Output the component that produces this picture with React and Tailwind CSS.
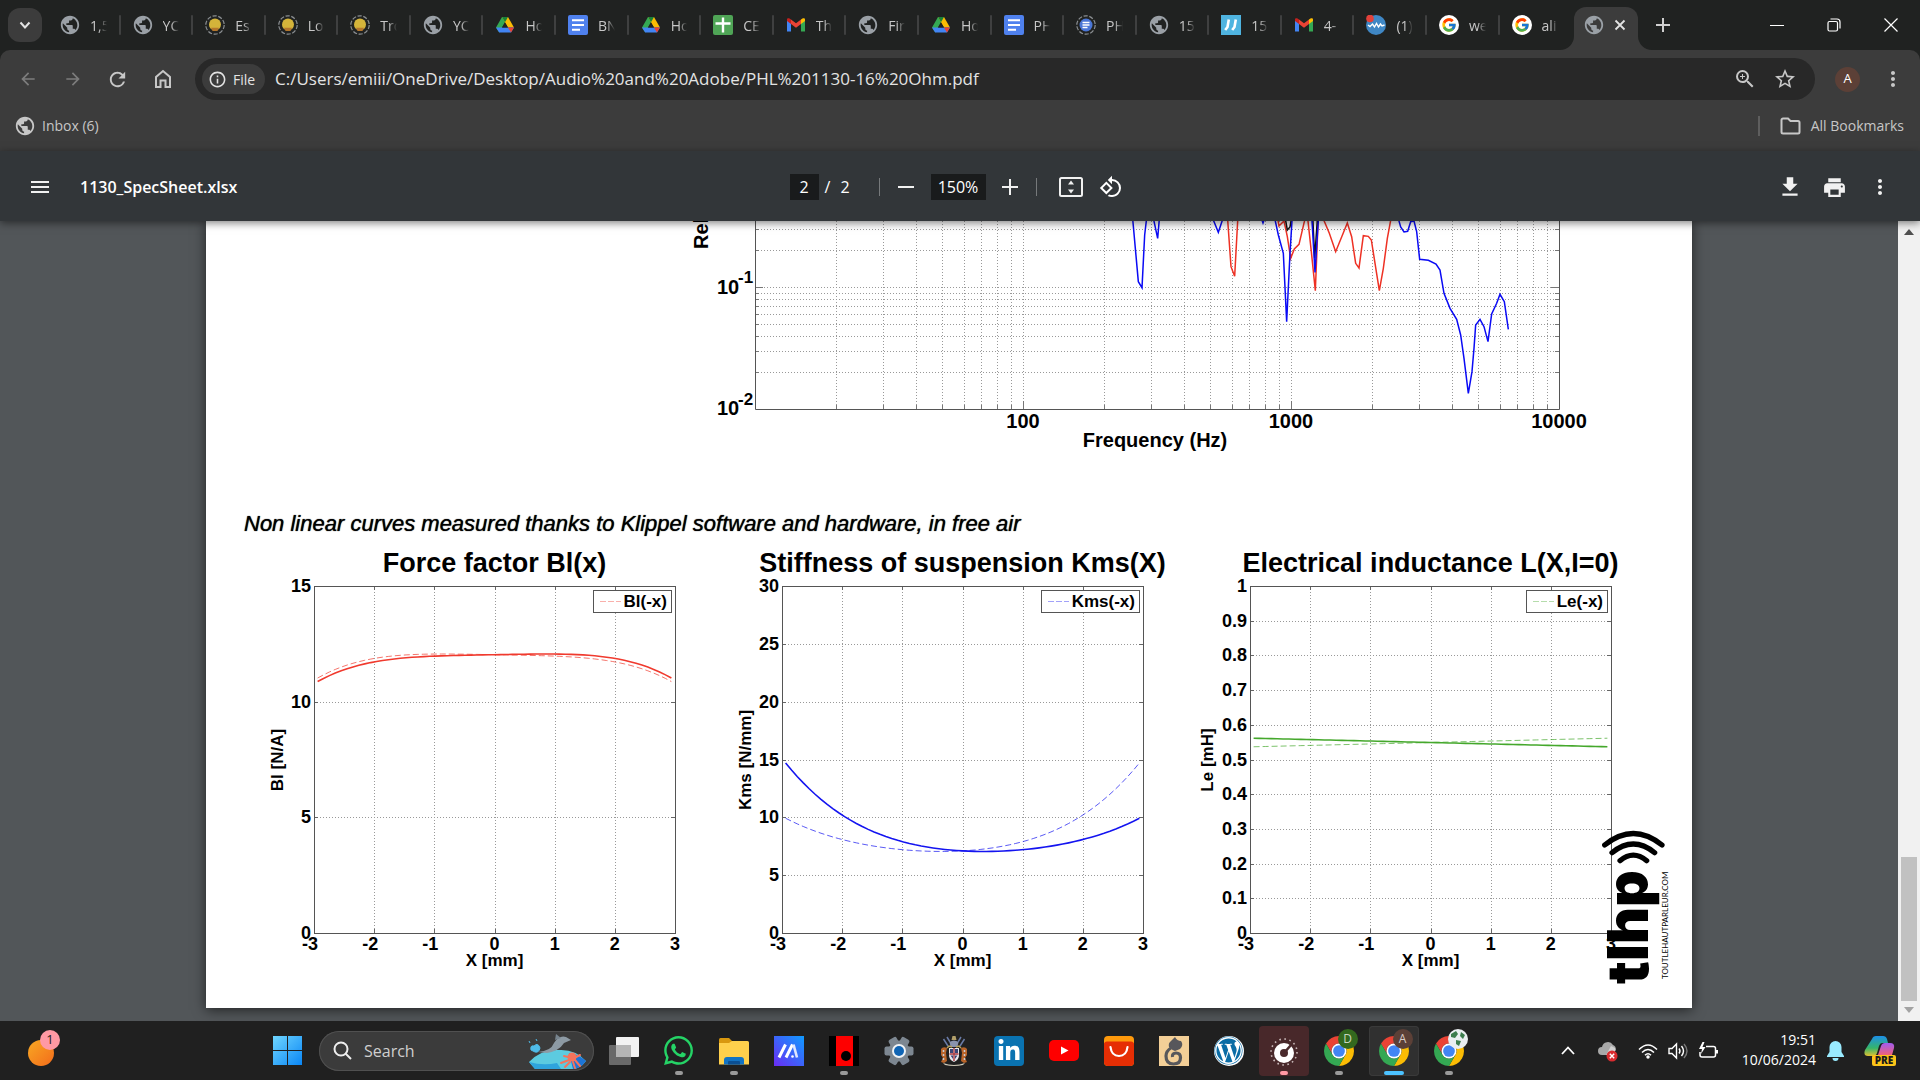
import { FaWhatsapp, FaWordpress, FaLinkedinIn } from 'react-icons/fa';
import { FcGoogle } from 'react-icons/fc';
import {
  MdArrowBack, MdArrowForward, MdFileDownload, MdInfoOutline, MdMenu, MdMoreVert, MdPrint,
  MdPublic, MdRefresh, MdRotate90DegreesCcw, MdStarOutline, MdZoomIn,
} from 'react-icons/md';

const UI_FONT = "font-['Open_Sans','Noto_Sans',sans-serif]";
const DOC_FONT = "font-['Liberation_Sans',Arial,sans-serif]";

/* ---------- favicons ---------- */

const Globe = () => <MdPublic className="h-[22px] w-[22px] -m-px text-[#9aa0a6]" />;

function Drive() {
  return (
    <svg viewBox="0 0 20 20" className="h-5 w-5">
      <path d="M7 2h6l-3.2 5.6L4.2 17.6 1 12.4z" fill="#34a853" />
      <path d="M7 2h6l6 10.4h-6.1z" fill="#fbbc04" />
      <path d="M7 2h6l-3 5.3z" fill="#188038" />
      <path d="M1 12.4h18l-3 5.2H4.2z" fill="#4285f4" />
      <path d="M12.9 12.4H19l-3 5.2z" fill="#ea4335" />
      <path d="M10 7.4l3 5H7z" fill="#202221" />
    </svg>
  );
}

function Docs() {
  return (
    <svg viewBox="0 0 20 20" className="h-5 w-5">
      <rect width="20" height="20" rx="2" fill="#4f81ee" />
      <path d="M4 5.2h12M4 10h12M4 14.8h8" stroke="#fff" strokeWidth="2" />
    </svg>
  );
}

function Sheets() {
  return (
    <svg viewBox="0 0 20 20" className="h-5 w-5">
      <rect width="20" height="20" rx="2" fill="#4fa556" />
      <path d="M10 2.5v15M2.5 8.5h15" stroke="#fff" strokeWidth="2.4" />
    </svg>
  );
}

function Gmail() {
  return (
    <svg viewBox="0 0 20 20" className="h-5 w-5">
      <path d="M1 5v11.5h4V8z" fill="#4285f4" />
      <path d="M15 8v8.500h4V5z" fill="#34a853" />
      <path d="M15 4.500V9l4-3V4.600C19 2.800 17 2.600 15 4.500z" fill="#fbbc04" />
      <path d="M1 4.600C1 2.800 3 2.600 5 4.500V9L1 6z" fill="#c5221f" />
      <path d="M5 4.500l5 3.800 5-3.800V9l-5 3.800L5 9z" fill="#ea4335" />
    </svg>
  );
}

function LoadingRing({ children }) {
  return (
    <svg viewBox="0 0 20 20" className="h-5 w-5">
      <circle cx="10" cy="10" r="9.200" fill="none" stroke="#8b8f92" strokeWidth="1.200" strokeDasharray="4.200 1.600" />
      {children}
    </svg>
  );
}

function Bulb() {
  return (
    <LoadingRing>
      <circle cx="10" cy="9.400" r="6" fill="#d4b43a" />
      <path d="M6 12.800h8l-1.500 3.200H7.500z" fill="#b3762c" />
    </LoadingRing>
  );
}

function DocsLoading() {
  return (
    <LoadingRing>
      <circle cx="10" cy="10" r="6.500" fill="#4a76d6" />
      <path d="M6.500 7.500h7M6.500 10h7M6.500 12.500h5" stroke="#fff" strokeWidth="1.300" />
    </LoadingRing>
  );
}

function Slashes() {
  return (
    <svg viewBox="0 0 20 20" className="h-5 w-5">
      <rect width="20" height="20" fill="#4fb4e0" />
      <path d="M7.800 4.500L6.500 12l-2.300 3M14.800 4.500L13.500 12l-2.300 3" fill="none" stroke="#fff" strokeWidth="2.600" />
    </svg>
  );
}

function Wave() {
  return (
    <svg viewBox="0 0 20 20" className="h-5 w-5">
      <circle cx="10" cy="10" r="10" fill="#3f87c4" />
      <path d="M2 10l2 1.500L6.500 9l2 3 2-3.500 2 3.500 2-3 1.500 2 2.500-1" fill="none" stroke="#fff" strokeWidth="1.400" />
      <circle cx="4" cy="3.500" r="3.800" fill="#e2413a" />
    </svg>
  );
}

function Google() {
  return (
    <span className="flex h-5 w-5 items-center justify-center rounded-full bg-white">
      <FcGoogle className="h-4 w-4" />
    </span>
  );
}

const TABS = [
  { icon: Globe, label: '1,5' },
  { icon: Globe, label: 'YC' },
  { icon: Bulb, label: 'Es' },
  { icon: Bulb, label: 'Lo' },
  { icon: Bulb, label: 'Tro' },
  { icon: Globe, label: 'YC' },
  { icon: Drive, label: 'Ho' },
  { icon: Docs, label: 'BN' },
  { icon: Drive, label: 'Ho' },
  { icon: Sheets, label: 'CE' },
  { icon: Gmail, label: 'Th' },
  { icon: Globe, label: 'Fir' },
  { icon: Drive, label: 'Ho' },
  { icon: Docs, label: 'PH' },
  { icon: DocsLoading, label: 'PH' },
  { icon: Globe, label: '15' },
  { icon: Slashes, label: '15' },
  { icon: Gmail, label: '4-' },
  { icon: Wave, label: '(1)' },
  { icon: Google, label: 'we' },
  { icon: Google, label: 'ali' },
];

/* ---------- browser chrome ---------- */

function TabStrip() {
  return (
    <div className="flex h-[50px] bg-[#202221]">
      <button aria-label="Search tabs" className="my-2 ml-2 mr-1.5 flex w-[34px] items-center justify-center rounded-xl bg-[#3c3c3c]">
        <svg viewBox="0 0 12 12" className="h-3 w-3">
          <path d="M1.500 3.500L6 8.500l4.500-5" fill="none" stroke="#e3e3e3" strokeWidth="2" />
        </svg>
      </button>
      <div className="flex min-w-0 flex-1">
        {TABS.map(({ icon: Icon, label }, i) => (
          <button key={i} className="flex min-w-0 flex-1 items-center pl-3">
            <span className="flex h-5 w-5 shrink-0 items-center justify-center"><Icon /></span>
            <span className="ml-2.5 min-w-0 flex-1 overflow-hidden whitespace-nowrap text-left text-[14px] text-[#c7c7c7] [mask-image:linear-gradient(to_right,#000_50%,transparent)]">
              {label}
            </span>
            <span className={i === TABS.length - 1 ? 'ml-3 w-0.5' : 'ml-3 h-5 w-0.5 rounded bg-[#3f4040]'} />
          </button>
        ))}
      </div>
      <div className="relative ml-0.5 mt-[7px] flex w-16 items-center justify-center gap-2 rounded-t-xl bg-[#3c3c3c]">
        <svg viewBox="0 0 14 14" className="absolute -left-3.5 bottom-0 h-3.5 w-3.5"><path d="M14 0v14H0A14 14 0 0 0 14 0z" fill="#3c3c3c" /></svg>
        <svg viewBox="0 0 14 14" className="absolute -right-3.5 bottom-0 h-3.5 w-3.5"><path d="M0 0v14h14A14 14 0 0 1 0 0z" fill="#3c3c3c" /></svg>
        <span className="mb-2 flex h-5 w-5 items-center justify-center"><Globe /></span>
        <button aria-label="Close tab" className="mb-2 flex h-4 w-4 items-center justify-center">
          <svg viewBox="0 0 12 12" className="h-3 w-3"><path d="M1.500 1.500l9 9M10.500 1.500l-9 9" stroke="#e3e3e3" strokeWidth="1.800" /></svg>
        </button>
      </div>
      <button aria-label="New tab" className="mr-[60px] flex w-[50px] items-center justify-center">
        <svg viewBox="0 0 14 14" className="h-3.5 w-3.5"><path d="M7 0v14M0 7h14" stroke="#d0d0d0" strokeWidth="2" /></svg>
      </button>
      <div className="mr-px flex">
        <button aria-label="Minimize" className="flex w-[57px] items-center justify-center">
          <svg viewBox="0 0 14 14" className="h-3.5 w-3.5"><path d="M0 7.500h14" stroke="#fff" /></svg>
        </button>
        <button aria-label="Restore" className="flex w-[57px] items-center justify-center">
          <svg viewBox="0 0 14 14" className="h-3.5 w-3.5" fill="none" stroke="#fff" strokeWidth="1.200">
            <rect x="1" y="3.500" width="9.500" height="9.500" rx="1.500" />
            <path d="M3.500 1h6.500a3 3 0 0 1 3 3v6.500" />
          </svg>
        </button>
        <button aria-label="Close" className="flex w-[57px] items-center justify-center">
          <svg viewBox="0 0 14 14" className="h-3.5 w-3.5"><path d="M.5.5l13 13M13.500.5l-13 13" stroke="#fff" strokeWidth="1.200" /></svg>
        </button>
      </div>
    </div>
  );
}

function AddressRow() {
  return (
    <div className="flex items-center px-[5px] py-2 text-[#c7c7c7]">
      <button aria-label="Back" className="flex w-[45px] justify-center text-[#7c7c7c]"><MdArrowBack className="h-5 w-5" /></button>
      <button aria-label="Forward" className="flex w-[45px] justify-center text-[#7c7c7c]"><MdArrowForward className="h-5 w-5" /></button>
      <button aria-label="Reload" className="flex w-[45px] justify-center"><MdRefresh className="h-[23px] w-[23px]" /></button>
      <button aria-label="Home" className="flex w-[45px] justify-center">
        <svg viewBox="0 0 20 20" className="h-5 w-5" fill="none" stroke="currentColor" strokeWidth="2">
          <path d="M3 18V8l7-6 7 6v10h-4.500v-6.500h-5V18z" />
        </svg>
      </button>
      <div className="ml-2.5 flex h-[42px] min-w-0 flex-1 items-center rounded-full bg-[#282828] pl-[7px] pr-2.5">
        <button className="flex h-[30px] w-[63px] items-center gap-1.5 rounded-full bg-[#3c3c3c] pl-1.5 text-[14px] font-medium text-[#e3e3e3]">
          <MdInfoOutline className="h-[19px] w-[19px]" />File
        </button>
        <input
          aria-label="Address"
          className="ml-2.5 min-w-0 flex-1 bg-transparent text-[17px] text-[#e3e3e3] outline-none"
          defaultValue="C:/Users/emiii/OneDrive/Desktop/Audio%20and%20Adobe/PHL%201130-16%20Ohm.pdf"
        />
        <button aria-label="Zoom" className="flex w-10 justify-center"><MdZoomIn className="h-6 w-6" /></button>
        <button aria-label="Bookmark this page" className="flex w-10 justify-center"><MdStarOutline className="h-6 w-6" /></button>
      </div>
      <button aria-label="Profile" className="ml-2.5 flex w-[45px] justify-center">
        <span className="flex h-[25px] w-[25px] items-center justify-center rounded-full bg-[#5c4037] text-[13px] text-white">A</span>
      </button>
      <button aria-label="Menu" className="flex w-[45px] justify-center"><MdMoreVert className="h-6 w-6" /></button>
    </div>
  );
}

function BookmarksBar() {
  return (
    <div className="flex h-[35px] items-center px-4 text-[14px] text-[#c7c7c7]">
      <a href="#inbox" className="flex items-center gap-1.5">
        <MdPublic className="h-[22px] w-[22px] -ml-0.5" />Inbox (6)
      </a>
      <span className="ml-auto h-5 w-0.5 bg-[#5e5e5e]" />
      <button className="ml-5 flex items-center gap-2.5">
        <svg viewBox="0 0 21 18" className="h-[18px] w-[21px]" fill="none" stroke="currentColor" strokeWidth="2">
          <path d="M1.500 3a1.500 1.500 0 0 1 1.500-1.500h5L10.500 4H18A1.500 1.500 0 0 1 19.500 5.500V15A1.500 1.500 0 0 1 18 16.500H3A1.500 1.500 0 0 1 1.500 15z" />
        </svg>
        All Bookmarks
      </button>
    </div>
  );
}

function PdfToolbar() {
  return (
    <div className="relative z-10 flex h-[70px] items-center bg-[#323639] pt-0.5 text-[#f1f1f1] shadow-[0_2px_8px_rgba(0,0,0,0.5)]">
      <div className="flex flex-1 items-center pl-7">
        <button aria-label="Menu"><MdMenu className="h-7 w-6" /></button>
        <h1 className="ml-7 text-[16px] font-semibold text-white">1130_SpecSheet.xlsx</h1>
      </div>
      <div className="mr-2.5 flex items-center text-base text-white">
        <input aria-label="Page number" defaultValue="2" className="h-[26px] w-[29px] bg-[#191b1c] text-center outline-none" />
        <span className="flex w-[60px] gap-2.5 pl-1.5"><span>/</span><span>2</span></span>
        <span className="h-[18px] w-px bg-[#76797b]" />
        <button aria-label="Zoom out" className="ml-1.5 flex w-10 justify-center">
          <svg viewBox="0 0 16 16" className="h-4 w-4"><path d="M0 8h16" stroke="#f1f1f1" strokeWidth="2" /></svg>
        </button>
        <input aria-label="Zoom level" defaultValue="150%" className="ml-[5px] h-[26px] w-[55px] bg-[#191b1c] text-center outline-none" />
        <button aria-label="Zoom in" className="ml-1 flex w-10 justify-center">
          <svg viewBox="0 0 16 16" className="h-4 w-4"><path d="M0 8h16M8 0v16" stroke="#f1f1f1" strokeWidth="2" /></svg>
        </button>
        <span className="ml-1.5 h-[18px] w-px bg-[#76797b]" />
        <button aria-label="Fit to page" className="ml-3.5 flex w-10 justify-center">
          <svg viewBox="0 0 24 20" className="h-5 w-6">
            <rect x="1" y="1" width="22" height="18" rx="1.500" fill="none" stroke="#f1f1f1" strokeWidth="2" />
            <path d="M12 3.500l3 4H9zM12 16.500l3-4H9z" fill="#f1f1f1" />
          </svg>
        </button>
        <button aria-label="Rotate counterclockwise" className="flex w-10 justify-center"><MdRotate90DegreesCcw className="h-6 w-6" /></button>
      </div>
      <div className="flex flex-1 items-center justify-end pr-[18px]">
        <button aria-label="Download" className="flex w-[45px] justify-center"><MdFileDownload className="h-[26px] w-[26px]" /></button>
        <button aria-label="Print" className="flex w-[45px] justify-center"><MdPrint className="h-[25px] w-[25px]" /></button>
        <button aria-label="More actions" className="flex w-[45px] justify-center"><MdMoreVert className="h-6 w-6" /></button>
      </div>
    </div>
  );
}

/* ---------- frequency response (log/log) ---------- */

const F_LEFT = 549;
const F_BOTTOM = 188;
const F_DECADE_X = 268;
const F_DECADE_Y = 122;

const fx = hz => F_LEFT + (Math.log10(hz) - 1) * F_DECADE_X;
const fy = v => F_BOTTOM - (Math.log10(v) + 2) * F_DECADE_Y;

const F_RED = [
  '262,0 273,155 284,184 294,0',
  '413,10 417,33 432,18 442,65 452,130 463,102 477,88 493,20 497,0',
  '502,0 514,110 526,227 535,0',
  '545,0 568,55 587,110 622,24 635,65 647,145 657,159 670,62 685,64 694,75 718,227 730,160 742,70 755,0',
];
const F_BLACK = ['434,0 442,45 450,36 456,0', '518,0 524,130 533,0'];
const F_BLUE = [
  '-23,0 -5,200 6,218 14,60 21,0',
  '38,0 53,70 59,0',
  '218,10 235,52 249,10',
  '364,10 369,24 374,10',
  '402,0 415,60 430,115 440,320 450,115 457,0',
  '515,0 525,172 536,0',
  '772,0 782,36 792,51 803,49 812,20 822,18 830,50 839,133 865,136 888,147 900,165 912,235 930,280 950,313 962,360 972,430 985,535 996,470 1002,400 1007,330 1020,313 1032,335 1044,380 1055,297 1070,265 1080,238 1093,260 1105,343',
];

function FrequencyChart() {
  const xs = [1, 2, 3].flatMap(d => [2, 3, 4, 5, 6, 7, 8, 9, 10].map(n => n * 10 ** d)).slice(0, 26);
  const ys = [0.02, 0.03, 0.04, 0.05, 0.06, 0.07, 0.08, 0.09, 0.1, 0.2, 0.3];
  const right = fx(10000);
  return (
    <svg viewBox="0 0 1486 289" className="block w-full text-[20px] font-bold">
      {xs.map(x => (
        <g key={x} stroke="#777">
          <path d={`M${Math.round(fx(x)) + 0.5} 0V${F_BOTTOM}`} strokeDasharray="1 2" stroke="#999" />
          <path d={`M${Math.round(fx(x)) + 0.5} ${F_BOTTOM}v-${x === 100 || x === 1000 ? 8 : 4}`} />
        </g>
      ))}
      {ys.map(y => (
        <g key={y} stroke="#777">
          <path d={`M${F_LEFT} ${Math.round(fy(y)) + 0.5}H${right}`} strokeDasharray="1 2" stroke="#999" />
          <path d={`M${F_LEFT} ${Math.round(fy(y)) + 0.5}h${y === 0.1 ? 8 : 4}M${right} ${Math.round(fy(y)) + 0.5}h-${y === 0.1 ? 8 : 4}`} />
        </g>
      ))}
      <path d={`M${F_LEFT}.5 0V188.500H${right}.5V0`} fill="none" stroke="#555" />
      <g transform="translate(934 -6) scale(.33333)" fill="none" strokeWidth="4.500">
        {F_RED.map(p => <polyline key={p} points={p} stroke="#ee3124" />)}
        {F_BLACK.map(p => <polyline key={p} points={p} stroke="#111" />)}
        {F_BLUE.map(p => <polyline key={p} points={p} stroke="#0a0af5" />)}
      </g>
      <text x="511" y="73">10</text>
      <text x="532" y="62" fontSize="17">-1</text>
      <text x="511" y="194">10</text>
      <text x="532" y="184" fontSize="17">-2</text>
      <text x={fx(100)} y="207" textAnchor="middle">100</text>
      <text x={fx(1000)} y="207" textAnchor="middle">1000</text>
      <text x={right} y="207" textAnchor="middle">10000</text>
      <text x="949" y="226" textAnchor="middle">Frequency (Hz)</text>
      <text transform="translate(502 28) rotate(-90)">Rel</text>
    </svg>
  );
}

/* ---------- displacement charts ---------- */

const P = { left: 90, top: 36, width: 361, height: 347 };

const CHARTS = [
  {
    title: 'Force factor Bl(x)', yLabel: 'Bl [N/A]', yLabelX: 59, legend: 'Bl(-x)', legendWidth: 78, color: '#f03a2e',
    max: 15, ticks: [0, 5, 10, 15],
    f: x => 12.03 + 0.0475 * x - 0.002 * x ** 2 - 0.0025 * x ** 3 - 0.0143 * x ** 4,
  },
  {
    title: 'Stiffness of suspension Kms(X)', yLabel: 'Kms [N/mm]', yLabelX: 59, legend: 'Kms(-x)', legendWidth: 98, color: '#1414f0',
    max: 30, ticks: [0, 5, 10, 15, 20, 25, 30],
    f: x => 7.1 - 0.285 * x + 0.43 * x ** 2 - 0.061 * x ** 3 + 0.02 * x ** 4,
  },
  {
    title: 'Electrical inductance L(X,I=0)', yLabel: 'Le [mH]', yLabelX: 53, legend: 'Le(-x)', legendWidth: 81, color: '#45a82c',
    max: 1, ticks: [0, 0.1, 0.2, 0.3, 0.4, 0.5, 0.6, 0.7, 0.8, 0.9, 1],
    f: x => 0.549 - 0.0042 * x,
  },
];

const px = x => P.left + ((x + 3) / 6) * P.width;

function DisplacementChart({ title, yLabel, yLabelX, legend, legendWidth, color, max, ticks, f }) {
  const bottom = P.top + P.height;
  const right = P.left + P.width;
  const py = v => bottom - (v / max) * P.height;
  const curve = fn => {
    const points = [];
    for (let x = -2.94; x <= 2.95; x += 0.098) points.push(`${px(x).toFixed(2)},${py(fn(x)).toFixed(2)}`);
    return points.join(' ');
  };
  return (
    <svg viewBox="0 0 468 430" className="block w-full overflow-visible text-[18px] font-bold">
      <text x={px(0)} y="22" textAnchor="middle" fontSize="27">{title}</text>
      {[-2, -1, 0, 1, 2].map(x => (
        <g key={x} stroke="#666">
          <path d={`M${Math.round(px(x)) + 0.5} ${P.top}V${bottom}`} strokeDasharray="1 2" stroke="#999" />
          <path d={`M${Math.round(px(x)) + 0.5} ${P.top}v4M${Math.round(px(x)) + 0.5} ${bottom}v-4`} />
        </g>
      ))}
      {ticks.slice(1, -1).map(v => (
        <g key={v} stroke="#666">
          <path d={`M${P.left} ${Math.round(py(v)) + 0.5}H${right}`} strokeDasharray="1 2" stroke="#999" />
          <path d={`M${P.left} ${Math.round(py(v)) + 0.5}h4M${right} ${Math.round(py(v)) + 0.5}h-4`} />
        </g>
      ))}
      <rect x={P.left + 0.5} y={P.top + 0.5} width={P.width} height={P.height} fill="none" stroke="#555" />
      <polyline points={curve(x => f(-x))} fill="none" stroke={color} strokeOpacity=".7" strokeDasharray="6 3" />
      <polyline points={curve(f)} fill="none" stroke={color} strokeWidth="1.600" />
      <rect x={447.5 - legendWidth} y="40.500" width={legendWidth} height="22" fill="#fff" stroke="#555" />
      <path d={`M${454 - legendWidth} 51.500h21`} stroke={color} strokeOpacity=".4" strokeDasharray="6 2" />
      <text x="443" y="57" textAnchor="end" fontSize="17">{legend}</text>
      {ticks.map(v => <text key={v} x={P.left - 3} y={py(v) + 6} textAnchor="end">{v}</text>)}
      {[-3, -2, -1, 0, 1, 2, 3].map(x => (
        <text key={x} x={px(x) - (x < 0 ? 4 : 0)} y="400" textAnchor="middle">{x}</text>
      ))}
      <text x={px(0)} y="416" textAnchor="middle" fontSize="17">X [mm]</text>
      <text transform={`translate(${yLabelX} 210) rotate(-90)`} textAnchor="middle" fontSize="17">{yLabel}</text>
    </svg>
  );
}

function TlhpLogo() {
  return (
    <svg viewBox="0 0 72 157" className="absolute bottom-[23px] right-5 h-[157px] w-[72px] overflow-visible">
      <g fill="none" stroke="#000" strokeWidth="5.200" strokeLinecap="round">
        <path d="M4.700 17Q33.300-6 62 17" />
        <path d="M12 24.700Q33.300 7.300 54.700 24.700" />
        <path d="M20 32.700Q33.300 21.500 46.700 32.700" />
      </g>
      <text transform="translate(48 156) rotate(-90)" fontFamily="Inter, sans-serif" fontWeight="900" fontSize="57">tlhp</text>
      <text transform="translate(68 151) rotate(-90)" fontFamily="Lato, sans-serif" fontSize="8">TOUTLEHAUTPARLEUR.COM</text>
    </svg>
  );
}

function PdfViewer() {
  return (
    <div className="flex min-h-0 flex-1 bg-[#525659]">
      <main className="min-w-0 flex-1 overflow-hidden">
        <article className={`relative mx-auto w-full max-w-[1486px] bg-white pb-7 text-black shadow-[0_2px_12px_rgba(0,0,0,0.6)] ${DOC_FONT}`}>
          <FrequencyChart />
          <h2 className="mb-3 pl-[38px] text-[22px] italic leading-7 [text-shadow:0_0_1px_#000]">
            Non linear curves measured thanks to Klippel software and hardware, in free air
          </h2>
          <div className="grid grid-cols-3 pl-[18px] pr-16">
            {CHARTS.map(c => <DisplacementChart key={c.title} {...c} />)}
          </div>
          <TlhpLogo />
        </article>
      </main>
      <div className="flex w-[22px] flex-col items-center bg-[#f1f1f1] py-2">
        <svg viewBox="0 0 10 6" className="h-1.5 w-2.5"><path d="M5 0l5 6H0z" fill="#505050" /></svg>
        <span className="mb-1.5 mt-auto h-36 w-4 bg-[#c1c1c1]" />
        <svg viewBox="0 0 10 6" className="h-1.5 w-2.5"><path d="M0 0h10L5 6z" fill="#a3a3a3" /></svg>
      </div>
    </div>
  );
}

/* ---------- taskbar ---------- */

function Chrome({ children }) {
  return (
    <span className="relative">
      <svg viewBox="2 2 44 44" className="h-[30px] w-[30px]">
        <path d="M4.950 13A22 22 0 0 1 43.050 13H24A11 11 0 0 0 14.470 29.500z" fill="#ea4335" />
        <path d="M43.050 13A22 22 0 0 1 24 46l9.530-16.500A11 11 0 0 0 24 13z" fill="#fbbc04" />
        <path d="M24 46A22 22 0 0 1 4.950 13l9.520 16.500a11 11 0 0 0 19.060 0z" fill="#34a853" />
        <circle cx="24" cy="24" r="11" fill="#fff" />
        <circle cx="24" cy="24" r="8.600" fill="#4285f4" />
      </svg>
      {children}
    </span>
  );
}

function TaskView() {
  return (
    <svg viewBox="0 0 30 30" className="h-[30px] w-[30px]">
      <rect x="7" y="1" width="23" height="20" rx="1" fill="#f2f2f2" />
      <rect x="0" y="9" width="22" height="20" rx="1" fill="#777" fillOpacity=".85" />
      <path d="M7 9h15v12H7z" fill="#b5b5b5" />
    </svg>
  );
}

function Explorer() {
  return (
    <svg viewBox="0 0 30 30" className="h-[30px] w-[30px]">
      <path d="M0 3.500Q0 2 1.500 2H10l3 3v6H0z" fill="#d9980f" />
      <path d="M0 7h10l3-2h15.500q1.500 0 1.500 1.500v22H0z" fill="#ffd04c" />
      <path d="M5 28.500V24q0-3 3-3h14q3 0 3 3v4.500z" fill="#1273c4" />
      <path d="M9 28.500V26q0-1 1-1h10q1 0 1 1v2.500z" fill="#0b4f93" />
    </svg>
  );
}

function Ma() {
  return (
    <svg viewBox="0 0 30 30" className="h-[30px] w-[30px]">
      <defs>
        <linearGradient id="ma" x1="0" y1="1" x2="1" y2="0"><stop offset="0" stopColor="#6a2cf5" /><stop offset="1" stopColor="#0f9bff" /></linearGradient>
      </defs>
      <rect width="30" height="30" fill="url(#ma)" />
      <path d="M5 21.500l6.500-13M12 21.500l6.500-13" stroke="#fff" strokeWidth="3" />
      <path d="M19.500 8.500l3.500 13" stroke="#dfe6ff" strokeWidth="2.600" />
      <circle cx="18.500" cy="20.500" r="1.300" fill="#fff" />
    </svg>
  );
}

function RedBar() {
  return (
    <svg viewBox="0 0 30 30" className="h-[30px] w-[30px]">
      <rect width="30" height="30" fill="#000" />
      <path d="M7 0h17v30H7z" fill="#fe0000" />
      <circle cx="17" cy="20" r="5" fill="#000" />
    </svg>
  );
}

function Gear() {
  return (
    <svg viewBox="0 0 30 30" className="h-[30px] w-[30px]">
      {[0, 60, 120].map(a => (
        <rect key={a} x="10.500" y=".5" width="9" height="29" rx="2" fill="#7d8791" transform={`rotate(${a + 30} 15 15)`} />
      ))}
      <circle cx="15" cy="15" r="10.500" fill="#7d8791" />
      <circle cx="15" cy="15" r="7" fill="#f0f3f6" />
      <circle cx="15" cy="15" r="5" fill="#0f64b4" />
    </svg>
  );
}

function Crest() {
  return (
    <svg viewBox="0 0 30 30" className="h-[30px] w-[30px]">
      <path d="M10.500 6q4.500-3 9 0l-1 5h-7z" fill="#8a93ad" />
      <path d="M13.500 0h3l1 4h-5z" fill="#b3a06a" />
      <path d="M9 10L4.500 3M21 10l4.500-7M11 6L8 1M19 6l3-5" stroke="#6a7ba6" strokeWidth="1.500" />
      <path d="M8 12l2-2 3 1M22 12l-2-2-3 1" stroke="#b8a25c" strokeWidth="1.500" fill="none" />
      <path d="M2 13q2-3 6-1l-1 5 1 8-3 2-3-1 2-4-2-3z" fill="#b8642a" />
      <path d="M28 13q-2-3-6-1l1 5-1 8 3 2 3-1-2-4 2-3z" fill="#b8642a" />
      <path d="M4.500 14v10M25.500 14v10" stroke="#c9cdd6" strokeWidth="1.500" strokeDasharray="2 2" />
      <path d="M10 12h10v7q0 5-5 7-5-2-5-7z" fill="#e8e8ec" />
      <path d="M15 12v13M10.500 18h9" stroke="#a93a40" strokeWidth="1.400" />
      <path d="M11 13h3v4h-3zM16 13h3v4h-3zM11.500 19.500H14V23zM18.500 19.500H16V23z" fill="#3a4676" />
      <path d="M4 27q11 4 22 0l-2 2q-9 2-18 0z" fill="#cfc9b8" />
    </svg>
  );
}

function YouTube() {
  return (
    <svg viewBox="0 0 30 30" className="h-[30px] w-[30px]">
      <rect y="4" width="30" height="21" rx="5" fill="#fe0000" />
      <path d="M12 10.500l7.500 4-7.500 4z" fill="#fff" />
    </svg>
  );
}

function AliExpress() {
  return (
    <svg viewBox="0 0 30 30" className="h-[30px] w-[30px]">
      <rect width="30" height="30" rx="4" fill="#ff9a0c" />
      <path d="M0 8q0-2 3-2.500h24q3 .5 3 2.500v18q0 4-4 4H4q-4 0-4-4z" fill="#e62e04" />
      <path d="M6.500 11q1 9 8.500 9t8.500-9" fill="none" stroke="#fff" strokeWidth="2.200" strokeLinecap="round" />
    </svg>
  );
}

function Swirl() {
  return (
    <svg viewBox="0 0 30 30" className="h-[30px] w-[30px]">
      <rect width="30" height="30" fill="#f3cf97" />
      <path d="M10 11Q9 7 12 5l4-4q2 4 6 4 3 4-1 8l-5 2q-3-1-6-4z" fill="#57575b" />
      <path d="M12 12q-5 3-5 8 0 8 7.500 8 7 0 7-6.500 0-4.500-4.500-4.500-4 0-3.500 4" fill="none" stroke="#57575b" strokeWidth="3.200" />
    </svg>
  );
}

function Meter() {
  return (
    <svg viewBox="0 0 30 30" className="h-[30px] w-[30px]">
      <circle cx="15" cy="16" r="13" fill="none" stroke="#e8dcdc" strokeWidth="1.600" strokeDasharray="1.600 3.500" strokeOpacity=".8" />
      <circle cx="15" cy="17" r="10" fill="#fff" />
      <circle cx="15" cy="17" r="4" fill="#4a2a2c" />
      <path d="M15 17l7-8" stroke="#4a2a2c" strokeWidth="2.500" />
    </svg>
  );
}

const APPS = [
  { name: 'Task view', icon: <TaskView /> },
  { name: 'WhatsApp', icon: <FaWhatsapp className="h-[33px] w-[33px] text-[#25d366]" />, open: true },
  { name: 'File Explorer', icon: <Explorer />, open: true },
  { name: 'Moving average', icon: <Ma /> },
  { name: 'Player', icon: <RedBar />, open: true },
  { name: 'Settings', icon: <Gear /> },
  { name: 'University', icon: <Crest /> },
  {
    name: 'LinkedIn',
    icon: <span className="flex h-[30px] w-[30px] items-center justify-center rounded bg-[#0a73b1]"><FaLinkedinIn className="h-6 w-6 text-white" /></span>,
  },
  { name: 'YouTube', icon: <YouTube /> },
  { name: 'AliExpress', icon: <AliExpress /> },
  { name: 'Swirl', icon: <Swirl /> },
  {
    name: 'WordPress',
    icon: <span className="flex h-[30px] w-[30px] items-center justify-center rounded-full bg-white"><FaWordpress className="h-[29px] w-[29px] text-[#0a6ca5]" /></span>,
  },
  { name: 'Meter', icon: <Meter />, box: 'bg-[#48282a]', bar: 'w-2 bg-[#ff99a4]' },
  {
    name: 'Chrome D', open: true,
    icon: <Chrome><span className="absolute -right-1 -top-[7px] flex h-5 w-5 items-center justify-center rounded-full bg-[#33691e] text-xs text-[#c9d8c0]">D</span></Chrome>,
  },
  {
    name: 'Chrome A', box: 'bg-[#303030] ring-1 ring-inset ring-[#3a3a3a]', bar: 'w-5 bg-[#4cc2ff]',
    icon: <Chrome><span className="absolute -right-1 -top-[7px] flex h-5 w-5 items-center justify-center rounded-full bg-[#5c4037] text-xs text-[#d8ccc8]">A</span></Chrome>,
  },
  {
    name: 'Chrome guest', open: true,
    icon: (
      <Chrome>
        <svg viewBox="0 0 20 20" className="absolute -right-1 -top-[7px] h-5 w-5">
          <circle cx="10" cy="10" r="10" fill="#e9eef0" />
          <path d="M3 5l5-3 2 3-3 4-4-1zM13 3l4 3-2 4-3-3zM8 11l5 1-2 5-3-2z" fill="#3c7d4d" />
        </svg>
      </Chrome>
    ),
  },
];

function Dolphin() {
  return (
    <svg viewBox="0 0 60 38" className="h-[38px] w-[60px]">
      <path d="M2 30Q14 17 32 18q16-1 27 11-6 8-13 8H8z" fill="#5ccbe0" />
      <path d="M2 30q14 4 28 1l4 6H8z" fill="#2fa4dd" />
      <path d="M42 21q11 2 17 8-6 8-13 8z" fill="#1d74d6" />
      <path d="M11 20q13-1 16-9 5-8 12-6l5 3-7 3q-5 8-17 10z" fill="#8d9aa4" />
      <path d="M28 8l1-6 5 4z" fill="#77848e" />
      <path d="M4 18q-1-5 3-4 4-4 6 2-1 5-5 4zM2 9l1 2M9 7l1 2" fill="#4fbbe8" stroke="#4fbbe8" />
      <circle cx="45" cy="25" r="4.500" fill="#f5735c" />
      <path d="M42 28l-8 3M43 30l-5 5M46 30l2 6M48 28l5 6M49 25l4-2M41 25l-4-1" stroke="#f5735c" strokeWidth="2" strokeLinecap="round" />
    </svg>
  );
}

function Tray() {
  return (
    <div className="ml-auto flex h-full items-center pr-2.5 text-white">
      <button aria-label="Show hidden icons" className="flex w-10 justify-center">
        <svg viewBox="0 0 14 9" className="h-[9px] w-3.5"><path d="M1 8l6-6.500L13 8" fill="none" stroke="#fff" strokeWidth="1.800" /></svg>
      </button>
      <button aria-label="OneDrive" className="mr-[5px] flex w-10 justify-center">
        <svg viewBox="0 0 20 22" className="h-[22px] w-5">
          <path d="M4 15a4 4 0 0 1 0-8A6 6 0 0 1 15 5q3 1 3 5l-4 5z" fill="#a8a8a8" />
          <path d="M8 15l5-9 4 2v7z" fill="#d0d0d0" />
          <circle cx="14" cy="16" r="5.500" fill="#d92b2f" />
          <path d="M11.800 13.800l4.400 4.400M16.200 13.800l-4.400 4.400" stroke="#fff" strokeWidth="1.400" />
        </svg>
      </button>
      <button aria-label="Wi-Fi" className="flex w-[30px] justify-center">
        <svg viewBox="0 0 20 16" className="h-4 w-5" fill="none" stroke="#fff" strokeWidth="1.500">
          <path d="M1 6.500q9-9 18 0M4 9.500q6-6 12 0M7 12.300q3-3 6 0" />
          <circle cx="10" cy="14" r="1" fill="#fff" />
        </svg>
      </button>
      <button aria-label="Volume" className="flex w-[30px] justify-center">
        <svg viewBox="0 0 20 18" className="h-[18px] w-5" fill="none" stroke="#fff" strokeWidth="1.400">
          <path d="M1 6.500h3L8.500 2v14L4 11.500H1z" />
          <path d="M11 6.500q2 2.500 0 5M13.500 4q4 5 0 10" />
          <path d="M16 2q6 7 0 14" stroke="#777" />
        </svg>
      </button>
      <button aria-label="Battery" className="flex w-[30px] justify-center">
        <svg viewBox="0 0 20 18" className="h-[18px] w-5" fill="none" stroke="#fff" strokeWidth="1.500">
          <path d="M8 4.500h7.500q2 0 2 2V13q0 2-2 2H4q-2 0-2-2v-3" />
          <path d="M19 8v3.500" strokeWidth="2" />
          <path d="M4.500 0L1 7h3l-1 5 4.500-7h-3l2-5z" fill="#fff" stroke="none" />
        </svg>
      </button>
      <button className="w-[93px] pb-0.5 text-right text-[14px] leading-5">
        <span className="block">19:51</span>
        <span className="block">10/06/2024</span>
      </button>
      <button aria-label="Notifications" className="ml-1 flex w-[30px] justify-center">
        <svg viewBox="0 0 17 20" className="h-5 w-[17px]" fill="#99ebff">
          <path d="M8.500 0a6 6 0 0 0-6 6v5L0 15v1h17v-1l-2.500-4V6a6 6 0 0 0-6-6zM5.500 17h6a3 3 0 0 1-6 0z" />
        </svg>
      </button>
      <button aria-label="Copilot" className="flex w-[60px] justify-center">
        <svg viewBox="0 0 32 30" className="h-[30px] w-8">
          <defs>
            <linearGradient id="cpa" x1="0" y1="0" x2="0" y2="1"><stop offset="0" stopColor="#1d8fe8" /><stop offset=".6" stopColor="#35b56a" /><stop offset="1" stopColor="#e0c032" /></linearGradient>
            <linearGradient id="cpb" x1="0" y1="0" x2="0" y2="1"><stop offset="0" stopColor="#a05cf0" /><stop offset="1" stopColor="#f0627a" /></linearGradient>
          </defs>
          <path d="M8 3q1-3 4-3h7q3 0 4 3l1 4h-6q-2 0-3 3l-2 7q-1 3-4 3H4q-5 0-3-6z" fill="url(#cpa)" />
          <path d="M14 19l3-9q1-3 4-3h5q5 0 4 5l-2 7z" fill="url(#cpb)" />
          <rect x="8" y="19" width="24" height="11" rx="2" fill="#fcc419" />
          <text x="20" y="28" textAnchor="middle" fontSize="10" fontWeight="800" fill="#1b1b1b">PRE</text>
        </svg>
      </button>
    </div>
  );
}

function Taskbar() {
  return (
    <footer className="flex h-[59px] items-center bg-[#202020]">
      <div className="w-[260px] pl-7">
        <button aria-label="Widgets" className="relative block h-[30px] w-[30px]">
          <span className="absolute left-0 top-1 h-[26px] w-[26px] rounded-full bg-linear-to-br from-[#f7a823] to-[#f26a1b]" />
          <span className="absolute -right-0.5 -top-1.5 flex h-5 w-5 items-center justify-center rounded-full bg-[#ff99a4] text-[13px] text-[#222]">1</span>
        </button>
      </div>
      <button aria-label="Start" className="flex w-[55px] justify-center">
        <svg viewBox="0 0 29 29" className="h-[29px] w-[29px]">
          <defs>
            <linearGradient id="win" x1="0" y1="0" x2="1" y2="1"><stop offset="0" stopColor="#6fd6ff" /><stop offset="1" stopColor="#0a86f5" /></linearGradient>
          </defs>
          <path d="M0 0h14v14H0zM15 0h14v14H15zM0 15h14v14H0zM15 15h14v14H15z" fill="url(#win)" />
        </svg>
      </button>
      <label className="ml-1 mr-0.5 flex h-10 w-[275px] items-center rounded-full bg-[#3b3b3b] pl-3.5 pr-[7px] ring-1 ring-inset ring-[#505050]">
        <svg viewBox="0 0 19 19" className="h-[19px] w-[19px] shrink-0" fill="none" stroke="#eee" strokeWidth="2">
          <circle cx="8" cy="8" r="6.500" />
          <path d="M12.500 12.500l5.500 5.500" />
        </svg>
        <input aria-label="Search" placeholder="Search" className="ml-3 min-w-0 flex-1 bg-transparent text-base outline-none placeholder:text-[#cfcfcf]" />
        <Dolphin />
      </label>
      {APPS.map(({ name, icon, open, box, bar }) => (
        <button key={name} aria-label={name} className="flex h-full w-[55px] items-center justify-center">
          <span className={`relative flex h-[50px] w-[50px] items-center justify-center rounded ${box || ''}`}>
            {icon}
            {(open || bar) && <span className={`absolute bottom-px h-1 rounded-full ${bar || 'w-2 bg-[#9a9a9a]'}`} />}
          </span>
        </button>
      ))}
      <Tray />
    </footer>
  );
}

export default function App() {
  return (
    <div className={`flex h-screen flex-col overflow-hidden bg-[#202221] ${UI_FONT}`}>
      <TabStrip />
      <header className="rounded-t-[10px] bg-[#3c3c3c] pb-2">
        <AddressRow />
        <BookmarksBar />
      </header>
      <PdfToolbar />
      <PdfViewer />
      <Taskbar />
    </div>
  );
}
